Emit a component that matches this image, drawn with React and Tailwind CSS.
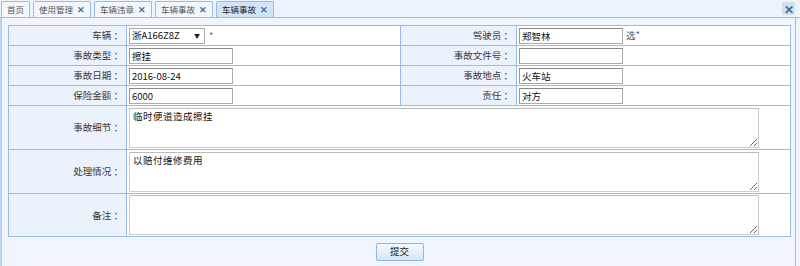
import React from 'react';

const font = { fontFamily: '"Noto Sans CJK SC", "Liberation Sans", sans-serif' };

const tabs = [
  { title: '首页', close: false },
  { title: '使用管理', close: true },
  { title: '车辆违章', close: true },
  { title: '车辆事故', close: true },
  { title: '车辆事故', close: true, active: true },
];

const Tab = ({ title, close, active }) => (
  <div
    className={`h-[16px] flex items-center gap-[4px] px-[5px] border border-b-0 border-[#99bbe8] rounded-t-[2px] text-[8.5px] leading-none ${
      active ? 'bg-[#d2e3f6] text-[#222]' : 'bg-[#f3f7fc] text-[#555]'
    }`}
  >
    <span>{title}</span>
    {close && <span className="text-[#4a6fa5] font-bold text-[9px]">✕</span>}
  </div>
);

const Input = ({ value = '', w = 'w-[104px]' }) => (
  <div className={`${w} h-[16px] border border-[#aaa] border-t-[#888] border-l-[#999] bg-white px-[2px] text-[9.5px] leading-[14px] text-[#111]`}>
    {value}
  </div>
);

const Label = ({ children, h = 'h-[20px]' }) => (
  <td className={`${h} bg-[#ebf2fc] border border-[#99bbe8] text-right pr-[3px] text-[9.5px] text-[#3a3a3a]`}>
    {children} ：
  </td>
);

const Cell = ({ children }) => (
  <td className="bg-white border border-[#99bbe8] px-[2px]">{children}</td>
);

const Area = ({ value = '' }) => (
  <textarea
    defaultValue={value}
    className="block w-[630px] h-[40px] border border-[#ccc] border-t-[#bbb] bg-white px-[3px] py-[1px] text-[9.5px] leading-[13px] tracking-[0.5px] text-[#111] outline-none"
  />
);

export default function App() {
  return (
    <div className="w-[800px] h-[266px] bg-[#eef4fc] overflow-hidden relative" style={font}>
      {/* tab strip */}
      <div className="h-[18px] flex items-end gap-[3px] pl-[1px] border-b border-[#99bbe8] bg-[#eef4fc]">
        {tabs.map((t, i) => (
          <Tab key={i} {...t} />
        ))}
      </div>
      <div className="absolute right-[5px] top-[2px] w-[13px] h-[13px] bg-[#d9dfe7] flex items-center justify-center text-[#2f6db5] text-[12px] font-bold leading-none">
        ✕
      </div>

      {/* body */}
      <div className="h-[248px] border-l-[2px] border-[#b7d4f4] mr-[4px] border-r border-r-[#99bbe8] bg-[#f0f5fd] pl-[6px] pt-[7px]">
        <table className="border-collapse w-[782px] table-fixed">
          <colgroup>
            <col className="w-[118px]" />
            <col className="w-[274px]" />
            <col className="w-[116px]" />
            <col className="w-[274px]" />
          </colgroup>
          <tbody>
            <tr>
              <Label>车辆</Label>
              <Cell>
                <div className="flex items-center gap-[4px]">
                  <div className="w-[76px] h-[16px] border border-[#aaa] bg-white flex items-center justify-between px-[2px] text-[9.5px] text-[#111]">
                    <span>浙A166Z8Z</span>
                    <span className="text-[6px] text-[#222] pr-[2px]">▼</span>
                  </div>
                  <span className="text-[9px] text-[#3a6db0]">*</span>
                </div>
              </Cell>
              <Label>驾驶员</Label>
              <Cell>
                <div className="flex items-center gap-[3px]">
                  <Input value="郑智林" />
                  <span className="text-[9.5px] text-[#555]">选<span className="text-[#3a6db0]">*</span></span>
                </div>
              </Cell>
            </tr>
            <tr>
              <Label>事故类型</Label>
              <Cell><Input value="擦挂" /></Cell>
              <Label>事故文件号</Label>
              <Cell><Input /></Cell>
            </tr>
            <tr>
              <Label>事故日期</Label>
              <Cell><Input value="2016-08-24" /></Cell>
              <Label>事故地点</Label>
              <Cell><Input value="火车站" /></Cell>
            </tr>
            <tr>
              <Label>保险金额</Label>
              <Cell><Input value="6000" /></Cell>
              <Label>责任</Label>
              <Cell><Input value="对方" /></Cell>
            </tr>
            <tr>
              <Label h="h-[44px]">事故细节</Label>
              <td colSpan={3} className="bg-white border border-[#99bbe8] px-[2px]">
                <Area value="临时便道造成擦挂" />
              </td>
            </tr>
            <tr>
              <Label h="h-[44px]">处理情况</Label>
              <td colSpan={3} className="bg-white border border-[#99bbe8] px-[2px]">
                <Area value="以赔付维修费用" />
              </td>
            </tr>
            <tr>
              <Label h="h-[43px]">备注</Label>
              <td colSpan={3} className="bg-white border border-[#99bbe8] px-[2px]">
                <Area />
              </td>
            </tr>
          </tbody>
        </table>
        <div className="flex justify-center pt-[6px] pr-[4px]">
          <button className="w-[48px] h-[18px] border border-[#8fb5e3] rounded-[2px] bg-gradient-to-b from-[#f4f8fd] to-[#d6e5f6] text-[9.5px] text-[#222] leading-none">
            提交
          </button>
        </div>
      </div>
    </div>
  );
}
